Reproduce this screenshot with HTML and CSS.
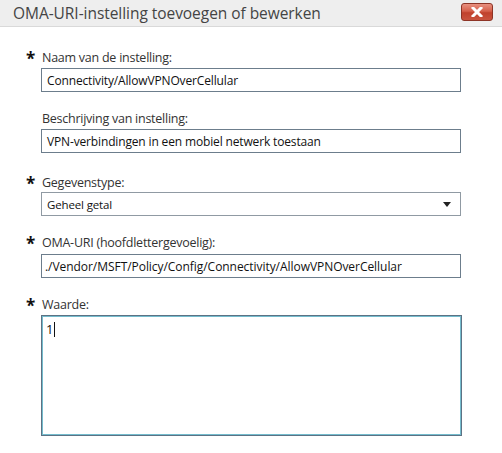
FILE: index.html
```html
<!DOCTYPE html>
<html lang="nl">
<head>
<meta charset="utf-8">
<link rel="stylesheet" href="styles.css">
</head>
<body>
<div class="dialog">
  <div class="titlebar">
    <div class="title">OMA-URI-instelling toevoegen of bewerken</div>
    <div class="close"><svg width="12" height="10" viewBox="0 0 12 10"><path d="M2 1 L10 9 M10 1 L2 9" stroke="#fff" stroke-width="3" stroke-linecap="square"/></svg></div>
  </div>
  <div class="form">
    <div class="field f1">
      <div class="label"><span class="req">*</span>Naam van de instelling:</div>
      <div class="input">Connectivity/AllowVPNOverCellular</div>
    </div>
    <div class="field f2">
      <div class="label"><span class="req"></span>Beschrijving van instelling:</div>
      <div class="input">VPN-verbindingen in een mobiel netwerk toestaan</div>
    </div>
    <div class="field f3">
      <div class="label"><span class="req">*</span>Gegevenstype:</div>
      <div class="input select"><span>Geheel getal</span><span class="arrow"></span></div>
    </div>
    <div class="field f4">
      <div class="label"><span class="req">*</span>OMA-URI (hoofdlettergevoelig):</div>
      <div class="input uri">./Vendor/MSFT/Policy/Config/Connectivity/AllowVPNOverCellular</div>
    </div>
    <div class="field f5">
      <div class="label"><span class="req">*</span>Waarde:</div>
      <div class="textarea">1<span class="caret"></span></div>
    </div>
  </div>
</div>
</body>
</html>
```

FILE: styles.css
```css
html, body {
  margin: 0;
  padding: 0;
  background: #ffffff;
}
body {
  width: 502px;
  height: 453px;
  overflow: hidden;
  font-family: "Open Sans", "Noto Sans", sans-serif;
  color: #222;
}
.dialog {
  display: flex;
  flex-direction: column;
}
.titlebar {
  height: 27px;
  box-sizing: border-box;
  background: #eeeeee;
  border-bottom: 1px solid #d9d9d9;
  display: flex;
  align-items: center;
  justify-content: space-between;
  padding: 0 9px 0 13px;
}
.title {
  font-size: 15.5px;
  color: #444;
  letter-spacing: -0.05px;
  margin-top: -1px;
}
.close {
  width: 32px;
  height: 18px;
  box-sizing: border-box;
  border: 1px solid #8d3426;
  border-radius: 3px;
  background: linear-gradient(#e8907f 0%, #d5604b 45%, #c0412c 55%, #c9533e 100%);
  display: flex;
  align-items: center;
  justify-content: center;
  margin-top: -3px;
}
.form {
  display: flex;
  flex-direction: column;
  padding: 22px 0 0 26px;
}
.field {
  display: flex;
  flex-direction: column;
}
.f2 { margin-top: 18px; }
.f3 { margin-top: 21px; }
.f4 { margin-top: 18px; }
.f5 { margin-top: 18px; }
.label {
  display: flex;
  align-items: center;
  height: 16px;
  font-size: 12.5px;
  color: #333;
  letter-spacing: -0.25px;
  margin-bottom: 3px;
}
.f3 .label { margin-bottom: 2px; }
.f4 .label { margin-bottom: 4px; }
.req {
  width: 16px;
  font-size: 17px;
  font-weight: bold;
  color: #111;
  line-height: 16px;
  padding-top: 4px;
}
.input {
  margin-left: 15px;
  width: 420px;
  height: 24px;
  box-sizing: border-box;
  border: 1px solid #6c7d8c;
  display: flex;
  align-items: center;
  padding-left: 5px;
  font-size: 12px;
  letter-spacing: -0.15px;
  color: #111;
}
.uri { padding-left: 3px; letter-spacing: -0.05px; }
.select {
  justify-content: space-between;
  padding-right: 9px;
  font-size: 11.5px;
  border-color: #909aa3;
}
.arrow {
  width: 0;
  height: 0;
  border-left: 4px solid transparent;
  border-right: 4px solid transparent;
  border-top: 5px solid #222;
}
.textarea {
  margin-left: 15px;
  width: 421px;
  height: 121px;
  box-sizing: border-box;
  border: 1px solid #5d7284;
  box-shadow: inset 0 0 0 1px #74bccd;
  padding: 5px 0 0 4px;
  font-size: 13px;
  color: #111;
  line-height: 16px;
  display: flex;
  align-items: flex-start;
}
.caret {
  display: inline-block;
  width: 1px;
  height: 15px;
  background: #111;
  margin-left: 1px;
  margin-top: 1px;
}
```
